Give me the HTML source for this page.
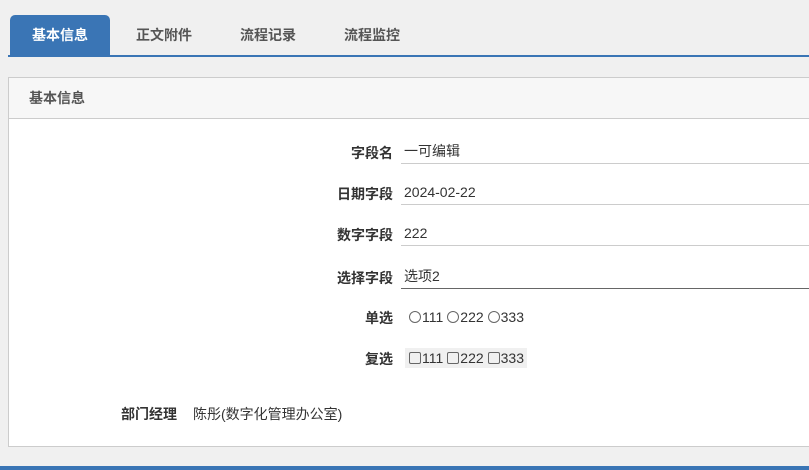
<!DOCTYPE html><html><head><meta charset="utf-8"><style>
body{margin:0;width:809px;height:470px;background:#f0f0f0;font-family:"Liberation Sans","Noto Sans CJK SC",sans-serif;position:relative;overflow:hidden;font-size:14px;color:#333}
.tab{position:absolute;top:15px;height:40px;line-height:40px;font-weight:bold;color:#555;font-size:14px}
.act{left:10px;width:100px;background:#3a75b5;color:#fff;text-align:center;border-radius:5px 5px 0 0}
.line{position:absolute;left:8px;right:0;top:55px;height:2px;background:#3a75b5}
.panel{position:absolute;left:8px;top:77px;width:820px;height:368px;background:#fff;border:1px solid #ccc}
.hd{height:40px;background:#f7f7f7;border-bottom:1px solid #ccc;line-height:40px;padding-left:20px;font-weight:bold;color:#555}
.lb{position:absolute;right:436px;font-weight:bold;color:#333;text-align:right}
.v{position:absolute;left:392px;width:430px;padding-left:3px;border-bottom:1px solid #ccc;height:22px;line-height:20px}
.o{position:absolute;left:396px;line-height:20px}
.c{display:inline-block;width:10px;height:10px;border:1px solid #666;border-radius:50%;vertical-align:-1px;margin:0 1px 0 4px}
.sq{border-radius:2px}
</style></head><body>
<div class="tab act">基本信息</div>
<div class="tab" style="left:136px">正文附件</div>
<div class="tab" style="left:240px">流程记录</div>
<div class="tab" style="left:344px">流程监控</div>
<div class="line"></div>
<div class="panel"><div class="hd">基本信息</div>
<div class="lb" style="top:65px">字段名</div><div class="v" style="top:63px">一可编辑</div>
<div class="lb" style="top:106px">日期字段</div><div class="v" style="top:104px">2024-02-22</div>
<div class="lb" style="top:147px">数字字段</div><div class="v" style="top:145px">222</div>
<div class="lb" style="top:190px">选择字段</div><div class="v" style="top:188px;border-color:#666">选项2</div>
<div class="lb" style="top:230px">单选</div><div class="o" style="top:229px"><span class="c"></span>111<span class="c"></span>222<span class="c"></span>333</div>
<div class="lb" style="top:271px">复选</div><div class="o" style="top:270px;background:#f0f0f0;padding-right:3px"><span class="c sq"></span>111<span class="c sq"></span>222<span class="c sq"></span>333</div>
<div style="position:absolute;left:112px;top:326px;font-weight:bold">部门经理</div>
<div style="position:absolute;left:184px;top:326px">陈彤(数字化管理办公室)</div>
</div>
<div style="position:absolute;left:0;right:0;top:466px;height:4px;background:#3a75b5"></div>
</body></html>
